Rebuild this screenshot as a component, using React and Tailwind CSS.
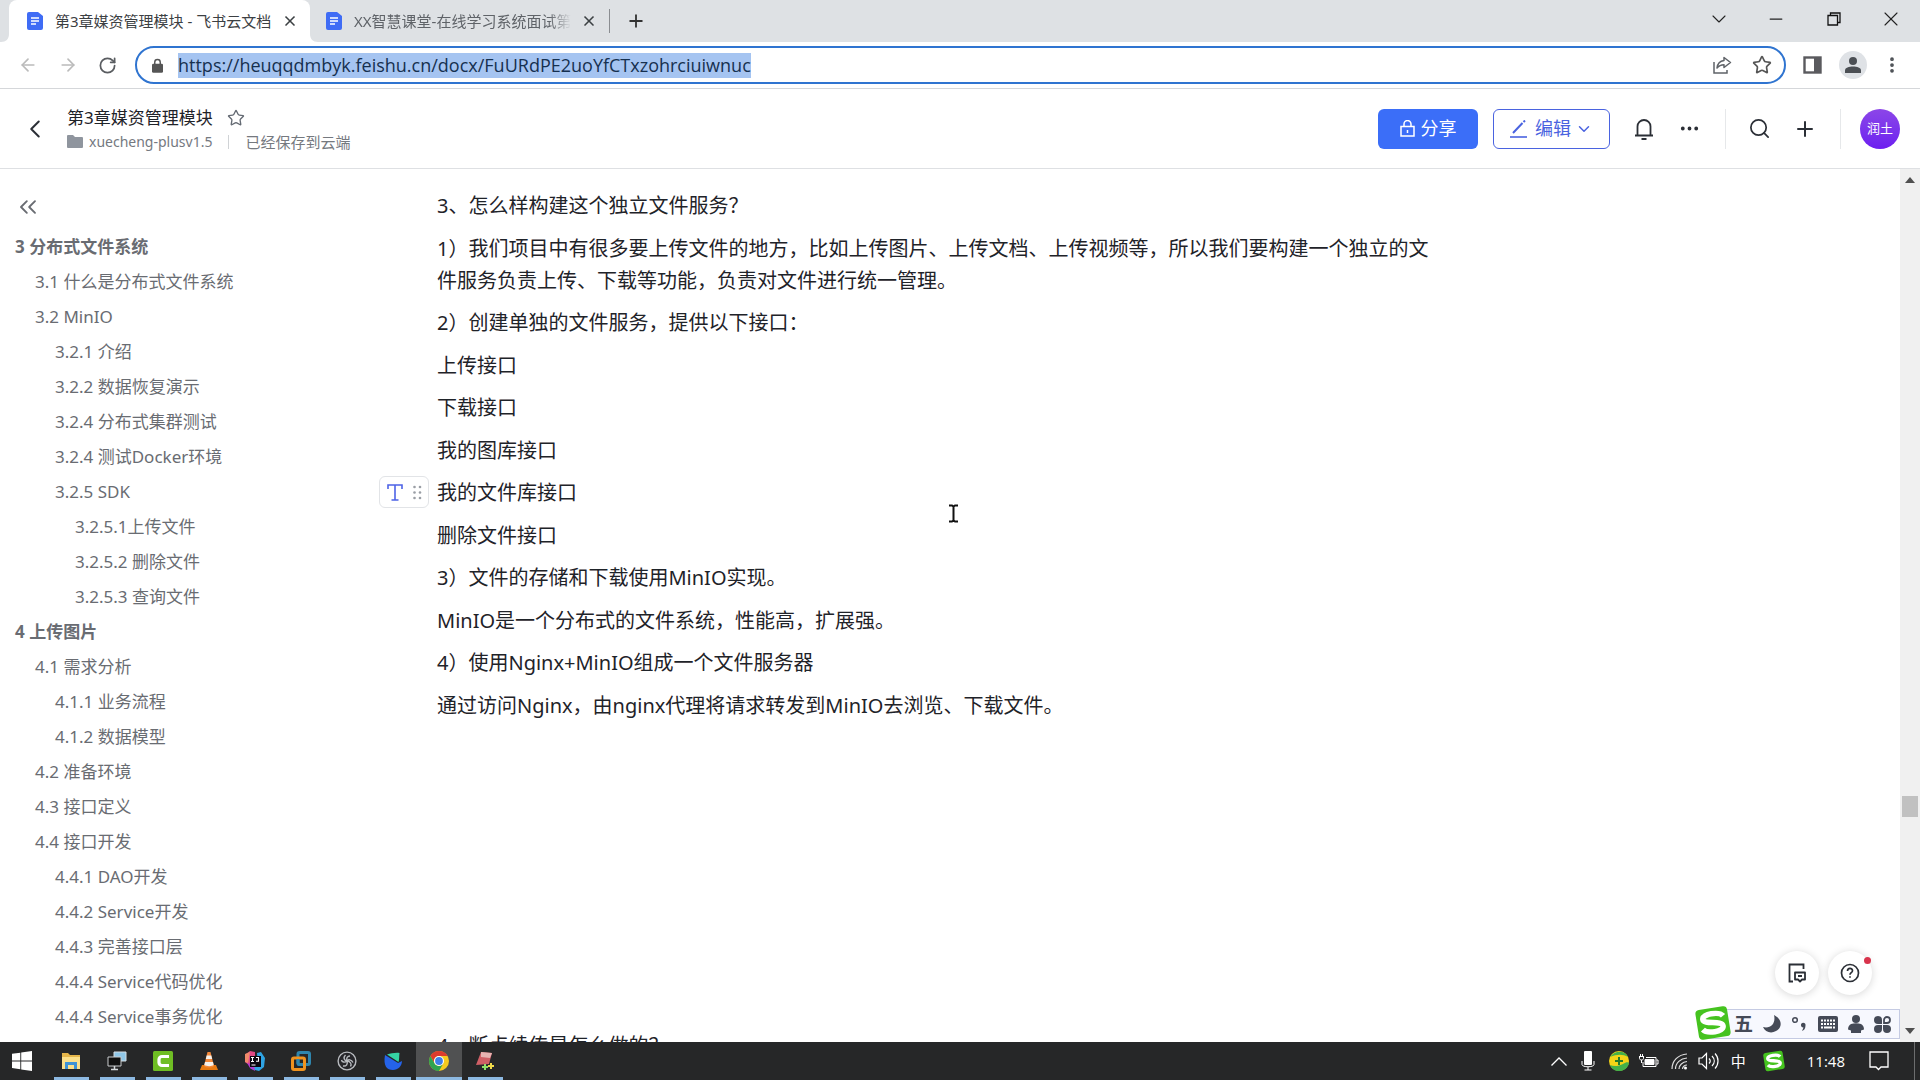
import React, { useState } from "react";
import {
  ArrowLeft,
  ArrowRight,
  ChevronDown,
  ChevronLeft,
  ChevronsLeft,
  Ellipsis,
  EllipsisVertical,
  Minus,
  Plus,
  RotateCw,
  Search,
  Star,
  X,
} from "lucide-react";

const OUTLINE = [
  { level: 1, text: "3 分布式文件系统" },
  { level: 2, text: "3.1 什么是分布式文件系统" },
  { level: 2, text: "3.2 MinIO" },
  { level: 3, text: "3.2.1 介绍" },
  { level: 3, text: "3.2.2 数据恢复演示" },
  { level: 3, text: "3.2.4 分布式集群测试" },
  { level: 3, text: "3.2.4 测试Docker环境" },
  { level: 3, text: "3.2.5 SDK" },
  { level: 4, text: "3.2.5.1上传文件" },
  { level: 4, text: "3.2.5.2 删除文件" },
  { level: 4, text: "3.2.5.3 查询文件" },
  { level: 1, text: "4 上传图片" },
  { level: 2, text: "4.1 需求分析" },
  { level: 3, text: "4.1.1 业务流程" },
  { level: 3, text: "4.1.2 数据模型" },
  { level: 2, text: "4.2 准备环境" },
  { level: 2, text: "4.3 接口定义" },
  { level: 2, text: "4.4 接口开发" },
  { level: 3, text: "4.4.1 DAO开发" },
  { level: 3, text: "4.4.2 Service开发" },
  { level: 3, text: "4.4.3 完善接口层" },
  { level: 3, text: "4.4.4 Service代码优化" },
  { level: 3, text: "4.4.4 Service事务优化" },
];

const LEVEL_CLASS = {
  1: "pl-[15px] font-bold",
  2: "pl-[35px]",
  3: "pl-[55px]",
  4: "pl-[75px]",
};

// Empty strings are blank paragraphs in the document
const PARAGRAPHS = [
  "3、怎么样构建这个独立文件服务？",
  "1）我们项目中有很多要上传文件的地方，比如上传图片、上传文档、上传视频等，所以我们要构建一个独立的文件服务负责上传、下载等功能，负责对文件进行统一管理。",
  "2）创建单独的文件服务，提供以下接口：",
  "上传接口",
  "下载接口",
  "我的图库接口",
  "我的文件库接口",
  "删除文件接口",
  "3）文件的存储和下载使用MinIO实现。",
  "MinIO是一个分布式的文件系统，性能高，扩展强。",
  "4）使用Nginx+MinIO组成一个文件服务器",
  "通过访问Nginx，由nginx代理将请求转发到MinIO去浏览、下载文件。",
  "",
  "",
  "",
  "",
  "",
  "",
  "",
  "4、断点续传是怎么做的？",
];

const ACTIVE_PARAGRAPH = 6;

/* ---------- small icons ---------- */

const DocIcon = () => (
  <svg viewBox="0 0 16 18" className="h-[18px] w-4 shrink-0">
    <path d="M2 0h9l5 4v12a2 2 0 0 1-2 2H2a2 2 0 0 1-2-2V2a2 2 0 0 1 2-2z" fill="#3f6cf5" />
    <path d="M4 6h8M4 9h8M4 12h5" stroke="#fff" strokeWidth="1.5" />
  </svg>
);

const SogouLogo = ({ className }) => (
  <svg viewBox="0 0 36 36" className={className}>
    <g transform="rotate(-9 18 18)">
      <rect x="2" y="3" width="32" height="30" rx="4" fill="#45c31f" />
      <path
        d="M29 12.500C26 7.500 8.500 7 8.500 13c0 5.500 19 3.500 19 9.500 0 6-17 5.500-20.500.5"
        fill="none"
        stroke="#fff"
        strokeWidth="5.500"
      />
    </g>
  </svg>
);

const TabFlare = ({ flip }) => (
  <svg viewBox="0 0 8 8" className={flip ? "size-2 -scale-x-100" : "size-2"}>
    <path d="M8 0C8 5 5 8 0 8h8z" fill="#fff" />
  </svg>
);

/* ---------- browser ---------- */

const TabStrip = () => (
  <div className="flex h-[42px] shrink-0 items-end bg-[#dee1e4] pl-px">
    <TabFlare />
    <div className="flex h-full w-[301px] items-center rounded-t-lg bg-white pr-3 pl-[18px]">
      <DocIcon />
      <span className="ml-3 flex-1 whitespace-nowrap text-[15px] text-[#3c4043]">
        第3章媒资管理模块 - 飞书云文档
      </span>
      <button aria-label="关闭标签页" className="text-[#3c4043]">
        <X size={16} strokeWidth={2.5} />
      </button>
    </div>
    <TabFlare flip />
    <div className="flex h-full w-[291px] items-center pr-3 pl-2">
      <DocIcon />
      <span className="ml-3 flex-1 overflow-hidden whitespace-nowrap text-[15px] text-[#5f6368] [mask-image:linear-gradient(to_right,black_90%,transparent)]">
        XX智慧课堂-在线学习系统面试第
      </span>
      <button aria-label="关闭标签页" className="ml-2.5 text-[#3c4043]">
        <X size={16} strokeWidth={2.5} />
      </button>
    </div>
    <div className="flex h-full flex-1 items-center">
      <span className="h-6 w-px bg-[#8a8d91]" />
      <button aria-label="新标签页" className="ml-4 text-[#333]">
        <Plus size={20} strokeWidth={2.2} />
      </button>
    </div>
    <div className="flex h-[38px] w-[230px] self-start text-[#222]">
      <button aria-label="搜索标签页" className="flex flex-1 items-center justify-center">
        <ChevronDown size={24} strokeWidth={1.1} />
      </button>
      <button aria-label="最小化" className="flex flex-1 items-center justify-center">
        <Minus size={20} strokeWidth={1.5} />
      </button>
      <button aria-label="还原" className="flex flex-1 items-center justify-center">
        <svg width="14" height="14" fill="none" stroke="#111" strokeWidth="1.300">
          <path d="M1 3.500h9.500V13H1zM3.500 3.500V1H13v9.500h-2.500" />
        </svg>
      </button>
      <button aria-label="关闭" className="flex flex-1 items-center justify-center">
        <X size={24} strokeWidth={1.1} />
      </button>
    </div>
  </div>
);

const Toolbar = () => {
  const [url, setUrl] = useState("https://heuqqdmbyk.feishu.cn/docx/FuURdPE2uoYfCTxzohrciuiwnuc");

  return (
    <div className="flex h-[47px] shrink-0 items-center border-b border-[#d5d7da] bg-white px-[18px]">
      <button aria-label="后退" className="w-10 text-[#bbb]">
        <ArrowLeft size={20} />
      </button>
      <button aria-label="前进" className="w-10 text-[#bbb]">
        <ArrowRight size={20} />
      </button>
      <button aria-label="重新加载" className="w-[37px] text-[#5a5d61]">
        <RotateCw size={19} strokeWidth={2.2} />
      </button>

      {/* Address bar */}
      <div className="flex h-[38px] flex-1 items-center rounded-full border-2 border-[#2f74d0] pr-3 pl-[15px]">
        <svg viewBox="0 0 12 16" className="h-[15px] w-[11px]">
          <path d="M3 7V4.500a3 3 0 0 1 6 0V7" fill="none" stroke="#555" strokeWidth="1.600" />
          <rect y="6" width="12" height="10" rx="1.500" fill="#555" />
        </svg>
        <input
          aria-label="地址栏"
          value={url}
          onChange={(e) => setUrl(e.target.value)}
          spellCheck={false}
          className="ml-[15px] h-[25px] field-sizing-content bg-[#a5c4f1] font-['Open_Sans',sans-serif] text-[18px] text-[#16304f] outline-none"
        />
        <span className="flex-1" />
        <button aria-label="分享此网页" className="mr-5">
          <svg width="20" height="20" viewBox="0 0 20 20" fill="none" stroke="#5f6368" strokeWidth="1.500">
            <path d="M2 7v11h13v-3" />
            <path d="M12 2.500l6.500 5L12 12.500V9.700c-3 0-5 .8-7 3.300.5-4 3-7 7-7.500z" strokeLinejoin="round" />
          </svg>
        </button>
        <button aria-label="收藏" className="text-[#555]">
          <Star size={20} />
        </button>
      </div>

      <button aria-label="侧边栏" className="ml-[17px]">
        <svg width="19" height="18">
          <rect x="1.500" y="1.500" width="16" height="15" fill="none" stroke="#5a5a5e" strokeWidth="2.400" />
          <rect x="11" y="1" width="7" height="16" fill="#5a5a5e" />
        </svg>
      </button>
      <button
        aria-label="个人资料"
        className="ml-[17px] flex size-7 items-center justify-center rounded-full bg-[#dfe2e6]"
      >
        <svg width="16" height="16" fill="#4b4f54">
          <circle cx="8" cy="4" r="4" />
          <path d="M0 16v-2.500C0 10.500 4 9.500 8 9.500s8 1 8 4V16z" />
        </svg>
      </button>
      <button aria-label="更多" className="ml-[15px] text-[#4b4f54]">
        <EllipsisVertical size={20} strokeWidth={2.5} />
      </button>
    </div>
  );
};

/* ---------- document page ---------- */

const DocHeader = () => (
  <header className="flex h-20 shrink-0 items-center border-b border-[#dee0e3] pr-5 pl-5 text-[#2b2f36]">
    <button aria-label="返回">
      <ChevronLeft size={30} strokeWidth={1.6} />
    </button>
    <div className="ml-[17px] pt-0.5">
      <div className="flex items-center gap-[14px]">
        <h1 className="text-[17px] leading-6 text-[#1f2329]">第3章媒资管理模块</h1>
        <Star size={18} strokeWidth={1.8} className="text-[#646a73]" />
      </div>
      <div className="flex items-center text-[15px] leading-6 text-[#75797f]">
        <svg width="16" height="13" fill="#8f959e">
          <path d="M0 1a1 1 0 0 1 1-1h5l2 2h7a1 1 0 0 1 1 1v9a1 1 0 0 1-1 1H1a1 1 0 0 1-1-1z" />
        </svg>
        <a href="#space" className="ml-1.5 text-[14px]">
          xuecheng-plusv1.5
        </a>
        <span className="mx-4 h-[14px] w-px bg-[#d0d3d6]" />
        <span>已经保存到云端</span>
      </div>
    </div>

    <div className="ml-auto flex items-center">
      <button className="flex h-10 w-[100px] items-center justify-center gap-1.5 rounded-md bg-[#3b6ef8] text-[18px] text-white">
        <svg width="15" height="17" fill="none" stroke="#fff" strokeWidth="1.500">
          <path d="M1 6.500h13V16H1zM4 6V4a3.500 3.500 0 0 1 7 0v2M7.500 10v3" />
        </svg>
        分享
      </button>
      <button className="ml-[15px] flex h-10 w-[117px] items-center justify-center rounded-md border border-[#4a63e0] text-[18px] text-[#4a63e0]">
        <svg width="17" height="18" fill="none" stroke="#4a63e0" strokeWidth="1.600">
          <path d="M0 17h17" />
          <path d="M3 13L12.500 3M13.500 2l1.500-1.500" strokeWidth="2" />
        </svg>
        <span className="ml-2">编辑</span>
        <ChevronDown size={18} className="ml-1" />
      </button>
      <button aria-label="通知" className="ml-[23px]">
        <svg width="22" height="22" viewBox="0 0 22 22" fill="none" stroke="currentColor" strokeWidth="1.800">
          <path d="M4.500 17V8.500a6.500 6.500 0 0 1 13 0V17M2 17.500h18M8.500 21h5" />
        </svg>
      </button>
      <button aria-label="更多操作" className="ml-[23px]">
        <Ellipsis size={23} strokeWidth={2} />
      </button>
      <span className="ml-[24px] h-10 w-px bg-[#e6e8ea]" />
      <button aria-label="搜索" className="ml-[22px]">
        <Search size={23} strokeWidth={1.8} />
      </button>
      <button aria-label="新建" className="ml-[22px]">
        <Plus size={24} strokeWidth={2} />
      </button>
      <span className="ml-[23px] h-10 w-px bg-[#e6e8ea]" />
      <button className="ml-[19px] size-10 rounded-full bg-linear-to-b from-[#8c45e8] to-[#6d1cf0] text-[13px] text-white">
        润土
      </button>
    </div>
  </header>
);

const Outline = () => (
  <nav className="w-[360px] shrink-0 text-[17px] text-[#696c72]">
    <button aria-label="收起目录" className="ml-[14px] flex h-[60px] items-center pt-[15px]">
      <ChevronsLeft size={28} strokeWidth={1.6} />
    </button>
    <ul>
      {OUTLINE.map((item, i) => (
        <li key={i} className={`h-[35px] leading-[35px] ${LEVEL_CLASS[item.level]}`}>
          <a href="#section">{item.text}</a>
        </li>
      ))}
    </ul>
  </nav>
);

const BlockHandle = () => (
  <button
    aria-label="段落菜单"
    className="absolute -top-px -left-[58px] flex h-8 w-[50px] items-center justify-center gap-2.5 rounded-md border border-[#e2e4e7] bg-white"
  >
    <svg width="16" height="17" fill="none" stroke="#4e63e6" strokeWidth="1.600">
      <path d="M1 5V1h14v4M8 1v15M4.500 16h7" />
    </svg>
    <svg width="9" height="15" fill="#9a9ea5">
      {[2, 7.5, 13].map((y) => (
        <g key={y}>
          <circle cx="1.500" cy={y} r="1.300" />
          <circle cx="7" cy={y} r="1.300" />
        </g>
      ))}
    </svg>
  </button>
);

const DocBody = () => (
  <article className="flex-1 overflow-hidden pt-[21px] pl-[77px] text-[20px] leading-8 text-[#1f2329]">
    <div className="max-w-[1008px]">
      {PARAGRAPHS.map((text, i) => (
        <p key={i} className="relative mb-[11px] min-h-8 even:mb-[10px]">
          {i === ACTIVE_PARAGRAPH && <BlockHandle />}
          {text}
        </p>
      ))}
    </div>
  </article>
);

const ScrollBar = () => (
  <div className="flex w-5 shrink-0 flex-col items-center bg-[#f0f0f0] pt-2 pb-2">
    <svg width="10" height="6" fill="#505050">
      <path d="M0 6l5-6 5 6z" />
    </svg>
    <div className="flex-[612]" />
    <div className="h-[21px] w-4 bg-[#c1c1c1]" />
    <div className="flex-[210]" />
    <svg width="10" height="6" fill="#505050">
      <path d="M0 0l5 6 5-6z" />
    </svg>
  </div>
);

const FloatingButtons = () => (
  <div className="absolute right-12 bottom-[47px] flex gap-[9px] text-[#2b2f36]">
    <button
      aria-label="评论"
      className="flex size-11 items-center justify-center rounded-full bg-white shadow-[0_1px_8px_rgba(0,0,0,0.16)]"
    >
      <svg width="18" height="20" fill="none" stroke="currentColor" strokeWidth="1.800">
        <path d="M15.500 6V1.500h-14v17H5" />
        <path d="M7 9.500h10v7h-3l-2 2-2-2H7zM10 13h4" strokeLinejoin="round" />
      </svg>
    </button>
    <button
      aria-label="帮助"
      className="relative flex size-11 items-center justify-center rounded-full bg-white shadow-[0_1px_8px_rgba(0,0,0,0.16)]"
    >
      <svg width="20" height="20" fill="none" stroke="currentColor" strokeWidth="1.700">
        <circle cx="10" cy="10" r="8.500" />
        <path d="M7.500 8c0-3.500 5-3.300 5-.3 0 2-2.500 2-2.500 4M10 13.200v1.600" />
      </svg>
      <span className="absolute top-1.5 right-px size-[7px] rounded-full bg-[#d8344c]" />
    </button>
  </div>
);

// Input method toolbar, floats above the page
const ImeBar = () => (
  <div className="absolute right-5 bottom-[3px] flex h-[30px] w-[192px] items-center justify-between border border-[#c5cbe3] bg-[#f7f8fe] pr-2 pl-[25px] text-[#454a57]">
    <SogouLogo className="absolute -top-[5px] -left-[14px] size-9" />
    <span className="text-[19px] font-bold">五</span>
    <svg width="18" height="18" fill="currentColor">
      <path d="M11 0c8 4 9 12 2 16-5 3-11 1-13-4 8 2 13-4 11-12z" />
    </svg>
    <svg width="16" height="16">
      <circle cx="4" cy="4" r="2.300" fill="none" stroke="currentColor" strokeWidth="1.500" />
      <path d="M10 9.500a2.300 2.300 0 1 1 4.500 0c0 3-1.500 5-3.500 5.500l1.500-3.500a2.300 2.300 0 0 1-2.500-2z" fill="currentColor" />
    </svg>
    <svg width="20" height="16">
      <rect width="20" height="16" rx="2" fill="currentColor" />
      <path d="M3 4.500h14M3 8h14" stroke="#fff" strokeWidth="2" strokeDasharray="2 1" />
      <path d="M3 11.500h2M6 11.500h8M15 11.500h2" stroke="#fff" strokeWidth="2" />
    </svg>
    <svg width="16" height="19" fill="currentColor">
      <circle cx="8" cy="4" r="4" />
      <path d="M3 9c3-1 7-1 10 0 2 1 3 3 3 5.500l-3 1V18H3v-2.500l-3-1C0 12 1 10 3 9z" />
    </svg>
    <svg width="17" height="17" fill="currentColor">
      <path d="M0 4a4 4 0 0 1 8 0v4H4a4 4 0 0 1-4-4zM0 13a4 4 0 0 1 4-4h4v4a4 4 0 0 1-8 0zM9 9h4a4 4 0 1 1-4 4z" />
      <path d="M10 7V4a3 3 0 1 1 3 3z" fill="none" stroke="currentColor" strokeWidth="1.800" />
    </svg>
  </div>
);

/* ---------- taskbar ---------- */

const APPS = [
  {
    name: "文件资源管理器",
    icon: (
      <svg width="20" height="18" viewBox="0 0 20 18">
        <path d="M1 1h6l2 2h10v14H1z" fill="#e5b64a" />
        <path d="M1 5h18v12H1z" fill="#fbe08b" />
        <path d="M4 17v-7h12v7h-3v-4H7v4z" fill="#3e93d6" />
      </svg>
    ),
  },
  {
    name: "远程桌面",
    icon: (
      <svg width="20" height="20" viewBox="0 0 20 20">
        <path d="M7 1h12v9H7z" fill="#8fc7e8" stroke="#d5dde2" />
        <path d="M1 6h13v9H1z" fill="#101010" stroke="#c9ccce" />
        <path d="M7.500 15v3M4 18.500h7" stroke="#d5d8da" strokeWidth="1.500" />
      </svg>
    ),
  },
  {
    name: "Camtasia",
    icon: (
      <svg width="20" height="20" viewBox="0 0 20 20">
        <rect width="20" height="20" rx="1.500" fill="#6fbe24" />
        <path d="M16 5.500H9A3 3 0 0 0 6 8.500v3a3 3 0 0 0 3 3h7" fill="none" stroke="#fff" strokeWidth="3.200" />
      </svg>
    ),
  },
  {
    name: "VLC",
    icon: (
      <svg width="18" height="20" viewBox="0 0 18 20">
        <path d="M2 14h14l2 5H0z" fill="#e87a12" />
        <path d="M7.500 1h3L14 15c-2 2-8 2-10 0z" fill="#f4883a" />
        <path d="M6.700 4.500h4.600l.9 3.500H5.800zM5 11h8l.7 3c-2 1.500-7 1.500-9.400 0z" fill="#f5f1ec" />
      </svg>
    ),
  },
  {
    name: "IntelliJ IDEA",
    icon: (
      <svg width="20" height="20" viewBox="0 0 20 20">
        <path d="M5 0l5 1v14l-6-1-4-3 1-8z" fill="#e04a86" />
        <path d="M0 3l5-2-2 11-3-1z" fill="#f08a6a" />
        <path d="M12 2l4-1 4 6-1 9-5 4-8-2-2-4h9z" fill="#2fa4e4" />
        <path d="M2 12l3 5 5 3-1-6z" fill="#b23ad0" />
        <path d="M5 5h11v11H5z" fill="#0b0710" />
        <path d="M6 6.500h3M7.500 6.500v4M6 10.500h3M11 6.500h2.500v3.800H11M6.500 14h4" stroke="#fff" strokeWidth="1.100" fill="none" />
      </svg>
    ),
  },
  {
    name: "VMware",
    icon: (
      <svg width="20" height="20" viewBox="0 0 20 20" fill="none" strokeWidth="3">
        <rect x="7" y="1.500" width="11.500" height="12" rx="1.500" stroke="#2f86ae" />
        <rect x="1.500" y="7" width="12" height="11.500" rx="1.500" stroke="#f0931f" />
        <path d="M7 8v4a1.500 1.500 0 0 0 1.500 1.500H12" stroke="#2f86ae" />
      </svg>
    ),
  },
  {
    name: "OBS",
    icon: (
      <svg width="20" height="20" viewBox="0 0 20 20" fill="none" stroke="#b9bcc0" strokeWidth="1.400">
        <circle cx="10" cy="10" r="8.900" fill="#26262a" />
        <path d="M8.500 4C6 6.500 7 9.500 10 10M16 11.500c-1.500-3-5-3.500-6-1.500M6 15c3.500.5 5-2 4-5M4.500 9c.5 2 3 3 5.500 1M13.500 15.500c1.500-2.500 0-5-3.500-5.500M13 5c-2.500 0-4 2-3 5" />
      </svg>
    ),
  },
  {
    name: "迅雷",
    icon: (
      <svg width="20" height="18" viewBox="0 0 20 18">
        <path d="M4 2.500C8 1.500 12 .5 16.500 1c-.5 3 0 6-1 9z" fill="#35d3a4" />
        <path d="M2 3l13 8 4-2c0 5-4 9-9 9-6 0-10-4-8-15z" fill="#2563e8" />
      </svg>
    ),
  },
  {
    name: "Chrome",
    active: true,
    icon: (
      <svg width="20" height="20" viewBox="0 0 20 20">
        <circle cx="10" cy="10" r="10" fill="#f7ca1e" />
        <path d="M1.340 5A10 10 0 0 1 18.660 5H10a5 5 0 0 0-4.330 7.500z" fill="#dc3b2e" />
        <path d="M1.340 5l4.330 7.500A5 5 0 0 0 14.330 12.500L10 20A10 10 0 0 1 1.340 5z" fill="#2fa350" />
        <circle cx="10" cy="10" r="5" fill="#fff" />
        <circle cx="10" cy="10" r="3.900" fill="#3f7fe8" />
      </svg>
    ),
  },
  {
    name: "截图工具",
    icon: (
      <svg width="18" height="20" viewBox="0 0 18 20">
        <path d="M5 1l11 1-3 11-13 1z" fill="#cf5f66" />
        <path d="M5 1l11 1-2 5-9-1z" fill="#e6b3b2" />
        <path d="M6 16h6M9 13v6" stroke="#8fe069" strokeWidth="2" />
        <path d="M12 15h6M15 12v6" stroke="#f0d94a" strokeWidth="2" />
      </svg>
    ),
  },
];

const Taskbar = () => (
  <footer className="flex h-[38px] shrink-0 bg-[#262728] text-white">
    <button aria-label="开始" className="flex w-12 items-center justify-center pr-1">
      <svg width="20" height="20" viewBox="0 0 20 20" fill="#fff">
        <path d="M0 2.800l8.300-1.100v7.800H0zM9.200 1.500L20 0v9.500H9.200zM0 10.400h8.300v7.900L0 17.100zM9.200 10.400H20V20L9.200 18.400z" />
      </svg>
    </button>
    {APPS.map((app) => (
      <button
        key={app.name}
        aria-label={app.name}
        className={`flex w-[46px] flex-col items-center ${app.active ? "bg-[#505152]" : ""}`}
      >
        <span className="flex flex-1 items-center pt-0.5">{app.icon}</span>
        <span className={app.active ? "h-[3px] w-full bg-[#8db9e2]" : "h-[3px] w-[35px] bg-[#8db9e2]"} />
      </button>
    ))}

    {/* System tray */}
    <div className="ml-auto flex items-center">
      <svg width="16" height="9" fill="none" stroke="#fff" strokeWidth="1.300">
        <path d="M0.500 8.500L8 1l7.500 7.500" />
      </svg>
      <svg width="14" height="20" className="ml-[14px]">
        <rect x="3" width="8" height="14" rx="1" fill="#fff" />
        <path d="M1 10v3.500c0 3 12 3 12 0V10M7 16v3M3.500 19h7" stroke="#fff" fill="none" />
      </svg>
      <svg width="20" height="20" className="ml-[14px]">
        <circle cx="10" cy="10" r="10" fill="#f3d417" />
        <path d="M1 6c5-7 15-7 18 0-5-3-11-3-18 0zM1 14c4 2 9 1 13-1 3-2 5-2 6-1-2 10-16 11-19 2z" fill="#43b049" />
        <path d="M10 6v8M6 10h8" stroke="#247a2c" strokeWidth="2" />
      </svg>
      <svg width="20" height="14" className="ml-[10px]" fill="none" stroke="#fff">
        <path d="M4 8v4.500h13v-9H7M17.500 6H19v4h-1.500M0 2.500h5M.5 2.500v2c0 2 4 2 4 0v-2M2.500 6v3M1.500 0v2.500M3.500 0v2.500" />
        <path d="M6 5.500h9v5H6z" fill="#fff" />
      </svg>
      <svg width="17" height="17" className="ml-[12px]" fill="none" stroke="#ddd" strokeWidth="1.200">
        <path d="M1 16C1 8 7 1.500 16 1M4.500 16c0-6 5-10.500 11.500-11M8 16c0-4 3.500-7 8-7.500M11.500 16c0-2 2-4 4.500-4" />
        <circle cx="14.500" cy="15" r="1.500" fill="#fff" stroke="none" />
      </svg>
      <svg width="21" height="18" className="ml-[10px]" fill="none" stroke="#fff" strokeWidth="1.200">
        <path d="M1 6h3l4.500-4.500v15L4 12H1zM11 6.500c1.500 1.500 1.500 3.500 0 5M14 4c3 3 3 7 0 10M17 1.500c4 4 4 11 0 15" />
      </svg>
      <span className="ml-[12px] w-4 text-[15px]">中</span>
      <SogouLogo className="ml-4 size-[22px]" />
      <time className="ml-[22px] font-['Open_Sans',sans-serif] text-[15px]">11:48</time>
      <svg width="20" height="20" className="ml-6" fill="none" stroke="#fff" strokeWidth="1.300">
        <path d="M1 1h18v15h-7l-2.500 2.500L7 16H1z" />
      </svg>
      <span className="ml-[25px] h-full w-px bg-[#6c6d6e]" />
      <span className="w-[5px]" />
    </div>
  </footer>
);

const TextCursor = () => (
  <svg width="11" height="19" className="absolute top-[335px] left-[948px]" fill="none" stroke="#111" strokeWidth="2">
    <path d="M1 1.500h3l1.500 1L7 1.500h3M5.500 2v15M1 17.500h3l1.500-1 1.500 1h3" />
  </svg>
);

const App = () => {
  return (
    <div className="flex h-screen flex-col overflow-hidden bg-white font-['Noto_Sans','Noto_Sans_CJK_SC',sans-serif]">
      <TabStrip />
      <Toolbar />
      <DocHeader />
      <main className="relative flex min-h-0 flex-1 overflow-hidden">
        <Outline />
        <DocBody />
        <ScrollBar />
        <TextCursor />
        <FloatingButtons />
        <ImeBar />
      </main>
      <Taskbar />
    </div>
  );
};

export default App;
